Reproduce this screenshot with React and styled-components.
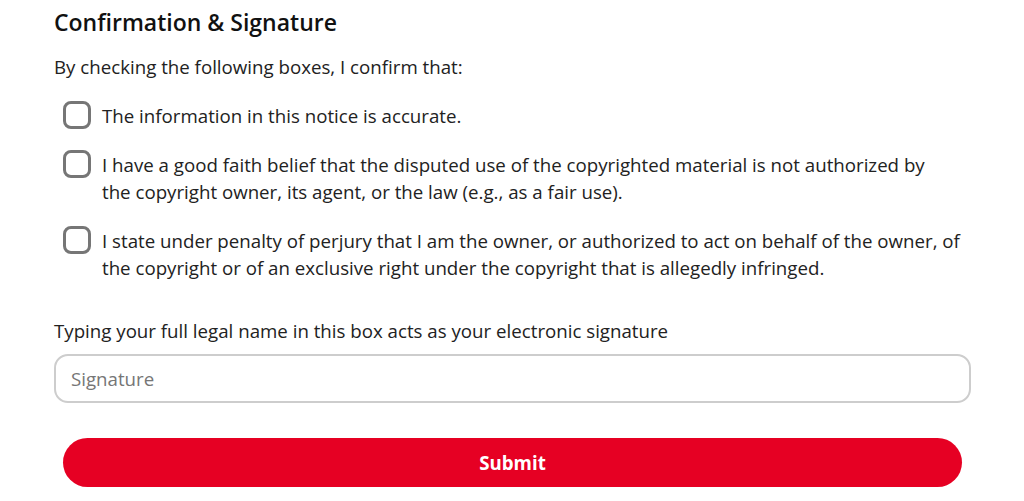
import React, { useState } from "react";
import styled, { createGlobalStyle } from "styled-components";

const GlobalStyle = createGlobalStyle`
  body {
    margin: 0;
    background: #fff;
    font-family: "Open Sans", "Noto Sans", sans-serif;
    color: #222;
  }
`;

const items = [
  "The information in this notice is accurate.",
  "I have a good faith belief that the disputed use of the copyrighted material is not authorized by the\u00a0copyright owner, its agent, or the law (e.g., as a fair use).",
  "I state under penalty of perjury that I am the owner, or authorized to act on behalf of the owner, of the copyright or of an exclusive right under the copyright that is allegedly infringed.",
];

const App = () => {
  const [checked, setChecked] = useState([false, false, false]);
  const [name, setName] = useState("");

  const toggle = (i) => {
    setChecked(checked.map((c, idx) => (idx === i ? !c : c)));
  };

  return (
    <>
      <GlobalStyle />
      <Form onSubmit={(e) => e.preventDefault()}>
        <Title>Confirmation &amp; Signature</Title>
        <Intro>By checking the following boxes, I confirm that:</Intro>
        <List>
          {items.map((text, i) => (
            <Item key={i} onClick={() => toggle(i)}>
              <Box isChecked={checked[i]} />
              <ItemText>{text}</ItemText>
            </Item>
          ))}
        </List>
        <Label>Typing your full legal name in this box acts as your electronic signature</Label>
        <Input
          type="text"
          placeholder="Signature"
          value={name}
          onChange={(e) => setName(e.target.value)}
        />
        <SubmitButton type="submit">Submit</SubmitButton>
      </Form>
    </>
  );
};

export default App;

const Form = styled.form`
  width: 917px;
  padding: 6px 0 0 54px;
  display: flex;
  flex-direction: column;
`;

const Title = styled.h2`
  margin: 0;
  font-size: 23px;
  font-weight: 600;
  line-height: 32px;
  color: #111;
`;

const Intro = styled.p`
  margin: 17px 0 0;
  font-size: 18.7px;
  line-height: 24px;
  color: #222;
`;

const List = styled.div`
  display: flex;
  flex-direction: column;
  gap: 22px;
  margin-top: 23px;
  padding-left: 9px;
`;

const Item = styled.label`
  display: flex;
  align-items: flex-start;
  gap: 11px;
  cursor: pointer;
`;

const Box = styled.span`
  flex: none;
  width: 28px;
  height: 28px;
  box-sizing: border-box;
  border: 3px solid #767676;
  border-radius: 8px;
  margin-top: -1px;
  background: ${({ isChecked }) => (isChecked ? "#111" : "#fff")};
`;

const ItemText = styled.span`
  font-size: 18.7px;
  line-height: 27px;
  color: #222;
  max-width: 860px;
`;

const Label = styled.div`
  margin-top: 38px;
  font-size: 18.7px;
  line-height: 24px;
  color: #222;
`;

const Input = styled.input`
  margin-top: 11px;
  height: 49px;
  box-sizing: border-box;
  border: 2px solid #cdcdcd;
  border-radius: 14px;
  padding: 0 15px;
  font-family: inherit;
  font-size: 18.7px;
  color: #222;
  outline: none;

  &::placeholder {
    color: #767676;
  }
`;

const SubmitButton = styled.button`
  margin: 35px 9px 0;
  height: 49px;
  border: none;
  border-radius: 25px;
  background: #e60023;
  color: #fff;
  font-family: inherit;
  font-size: 18.7px;
  font-weight: 700;
  cursor: pointer;
`;
